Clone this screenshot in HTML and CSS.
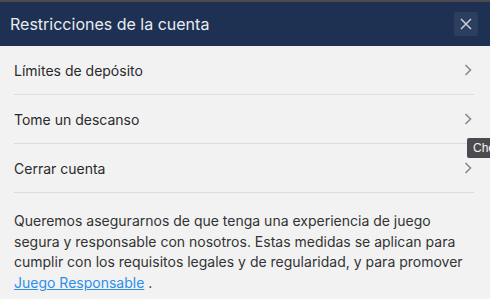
FILE: index.html
```html
<!DOCTYPE html>
<html lang="es">
<head>
<meta charset="utf-8">
<link rel="stylesheet" href="styles.css">
</head>
<body>
<div class="topline"></div>
<div class="modal">
  <header class="modal-header">
    <h1 class="modal-title">Restricciones de la cuenta</h1>
    <button class="close-btn" aria-label="Cerrar">
      <svg width="12" height="12" viewBox="0 0 12 12"><path d="M1 1 L11 11 M11 1 L1 11" stroke="#c9ced8" stroke-width="1.5" fill="none"/></svg>
    </button>
  </header>
  <div class="modal-body">
    <ul class="menu">
      <li class="menu-item"><span>Límites de depósito</span><svg class="chev" width="8" height="12" viewBox="0 0 8 12"><path d="M1.5 1 L6.5 6 L1.5 11" stroke="#8a8a8a" stroke-width="1.6" fill="none"/></svg></li>
      <li class="menu-item"><span>Tome un descanso</span><svg class="chev" width="8" height="12" viewBox="0 0 8 12"><path d="M1.5 1 L6.5 6 L1.5 11" stroke="#8a8a8a" stroke-width="1.6" fill="none"/></svg></li>
      <li class="menu-item"><span>Cerrar cuenta</span><svg class="chev" width="8" height="12" viewBox="0 0 8 12"><path d="M1.5 1 L6.5 6 L1.5 11" stroke="#8a8a8a" stroke-width="1.6" fill="none"/></svg></li>
    </ul>
    <p class="info">Queremos asegurarnos de que tenga una experiencia de juego segura y responsable con nosotros. Estas medidas se aplican para cumplir con los requisitos legales y de regularidad, y para promover <a href="#" class="link">Juego Responsable</a> .</p>
  </div>
  <div class="tooltip">Che</div>
</div>
</body>
</html>
```
FILE: styles.css
```css
* { box-sizing: border-box; }
html, body { margin: 0; padding: 0; }
body {
  width: 490px;
  height: 299px;
  overflow: hidden;
  background: #f2f2f2;
  font-family: Inter, "Noto Sans", sans-serif;
}
.topline { height: 2px; background: #4a4c50; }
.modal { position: relative; }
.modal-header {
  height: 44px;
  background: #1e3152;
  display: flex;
  align-items: center;
  justify-content: space-between;
  padding: 0 12px 0 10px;
}
.modal-title {
  margin: 0;
  font-size: 16px;
  font-weight: 400;
  color: #e9ecf1;
}
.close-btn {
  width: 24px;
  height: 24px;
  border: 0;
  padding: 0;
  background: #2d3f5e;
  border-radius: 2px;
  display: flex;
  align-items: center;
  justify-content: center;
}
.modal-body { padding: 0 16px 0 14px; }
.menu { list-style: none; margin: 0; padding: 0; }
.menu-item {
  height: 49px;
  display: flex;
  align-items: center;
  justify-content: space-between;
  border-bottom: 1px solid #dcdcdc;
  font-size: 14px;
  color: #2a2a2a;
  padding-right: 2px;
}
.chev { display: block; }
.info {
  margin: 18px 0 0;
  font-size: 14px;
  line-height: 20.5px;
  color: #333;
}
.link { color: #2d8fe8; }
.tooltip {
  position: absolute;
  top: 136px;
  left: 467px;
  height: 20px;
  padding: 0 6px;
  background: #4b4b4f;
  color: #f2f2f2;
  font-family: "Liberation Sans", sans-serif;
  font-size: 12px;
  line-height: 20px;
  border-radius: 2px 0 0 2px;
}
```
